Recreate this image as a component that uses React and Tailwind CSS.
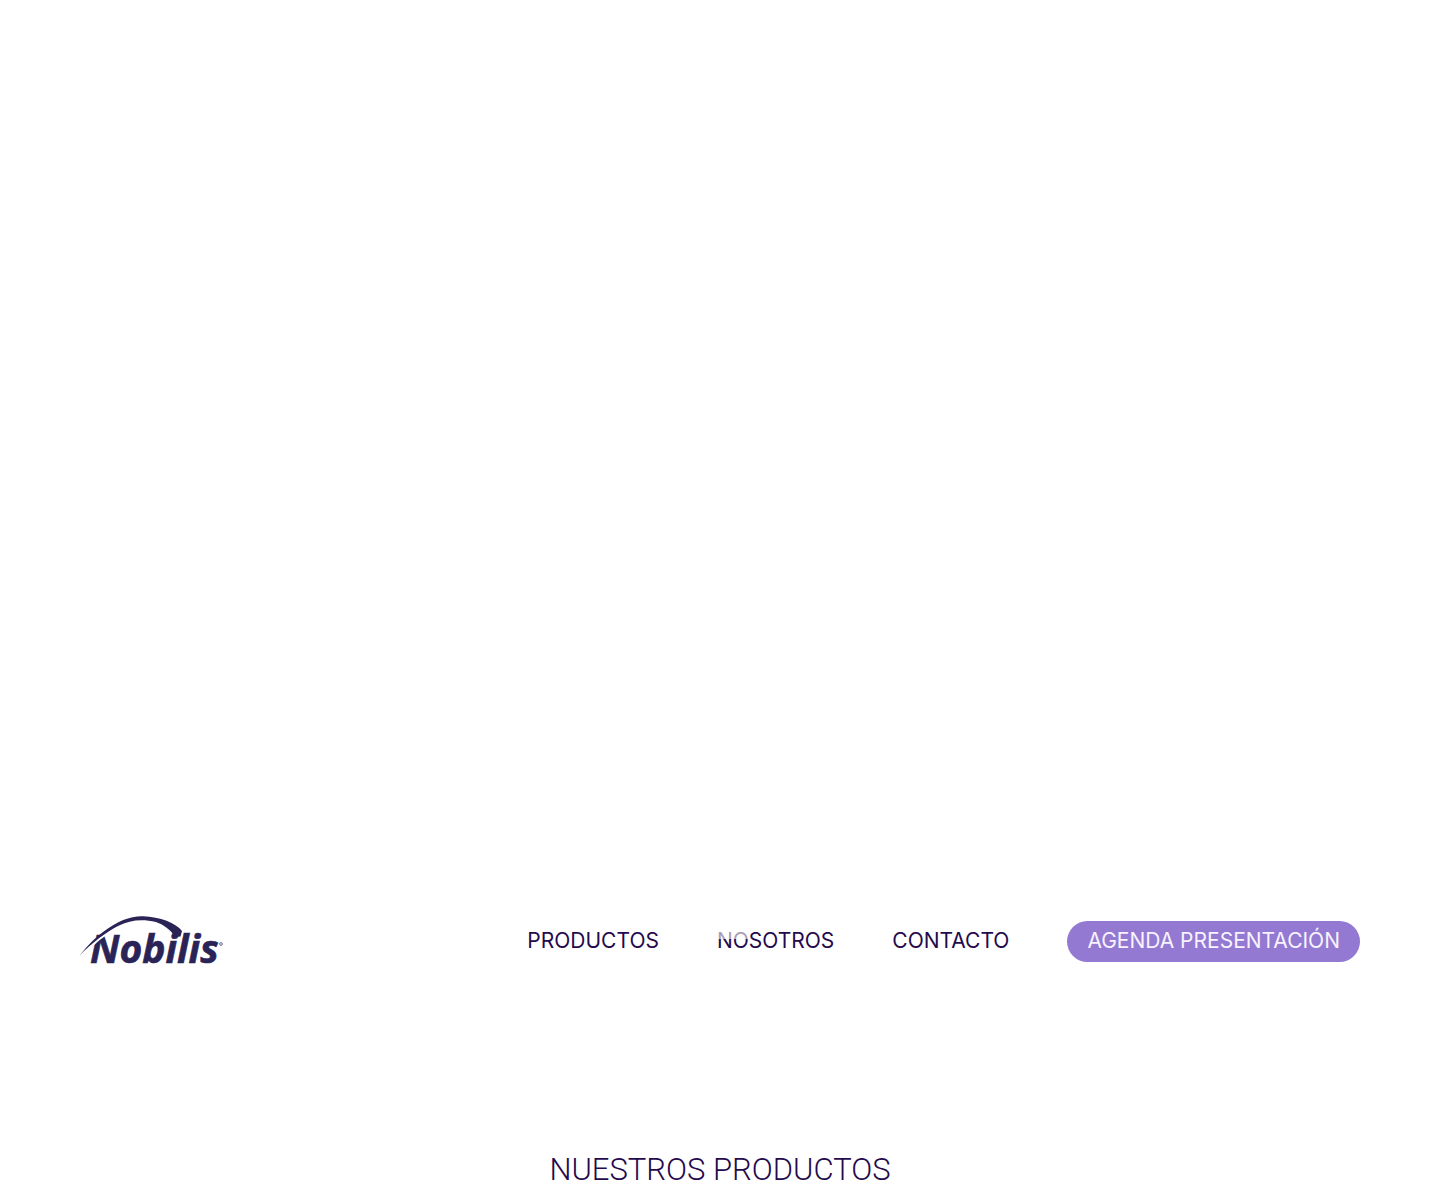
const NAV_LINKS = [
  { label: 'PRODUCTOS', href: '#productos' },
  { label: 'NOSOTROS', href: '#nosotros', veiled: true },
  { label: 'CONTACTO', href: '#contacto' },
];

const Logo = () => (
  <a href="#inicio" aria-label="Nobilis" className="block shrink-0">
    <svg width="144" height="66" viewBox="0 -8 144 66" fill="#2a2356">
      <text
        x="10"
        y="47"
        fontFamily="'Open Sans', 'Noto Sans', sans-serif"
        fontSize="39"
        fontWeight="700"
        fontStyle="italic"
        stroke="#2a2356"
        strokeWidth="0.600"
      >
        Nobilis
      </text>
      <path d="M10 31C15 26 21 21 29 16" fill="none" stroke="#fff" strokeWidth="2.500" />
      <path d="M0 39C8 29 15 22 23 16C38 5 50 0 63 0.300C80 1 96 7 102 15L100.500 20.500L95.500 21C90 13 82 8 76 6C62 3 50 4 38 10C26 16 12 27 0 39Z" />
      <circle cx="141" cy="28" r="1.500" fill="#c4c2d0" stroke="#8c89a5" strokeWidth="1" />
    </svg>
  </a>
);

const Navbar = () => (
  <header className="flex items-center justify-between px-20 py-2">
    <Logo />
    <nav className="flex items-center gap-[58px] text-[21px] leading-7 text-[#240a4d]">
      {NAV_LINKS.map(({ label, href, veiled }) => (
        <a key={label} href={href} className="relative">
          {label}
          {veiled && (
            <span className="absolute left-0 top-0 h-3 w-8 bg-white/60" />
          )}
        </a>
      ))}
      <button className="h-[41px] rounded-full bg-[#9379d1] px-5 text-[#f8f2ff] cursor-pointer">
        AGENDA PRESENTACIÓN
      </button>
    </nav>
  </header>
);

const App = () => (
  <div className="bg-white font-['Inter',sans-serif]">
    {/* Hero */}
    <section id="inicio" className="h-[900px]" />

    <Navbar />

    <main id="productos" className="pt-[170px] pb-3">
      <h1 className="text-center font-['Roboto',sans-serif] text-[31px] leading-9 font-light text-[#240a4d]">
        NUESTROS PRODUCTOS
      </h1>
    </main>
  </div>
);

export default App;
